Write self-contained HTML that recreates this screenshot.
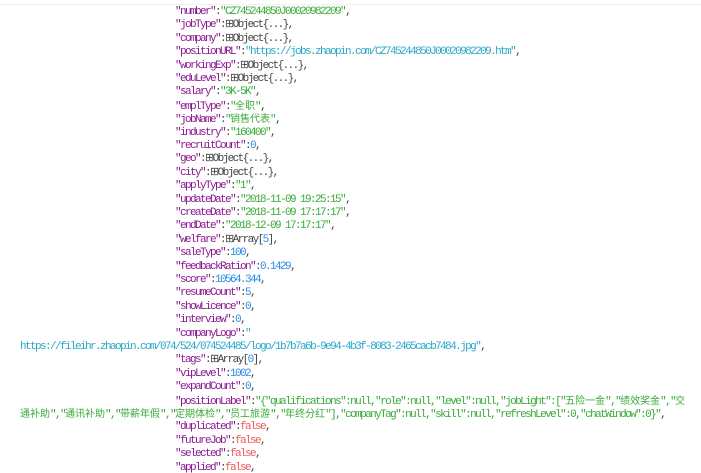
<!DOCTYPE html>
<html><head><meta charset="utf-8"><style>
html,body{margin:0;padding:0;background:#fff;width:701px;height:473px;overflow:hidden}
body{position:relative;font-family:"Liberation Mono","Noto Sans CJK SC",monospace;font-size:11px;letter-spacing:-1.6px}
.top{position:absolute;left:0;top:4px;width:701px;height:1px;background:#f0f0f0}
.l{position:absolute;left:175px;white-space:pre;line-height:13px;height:13px}
.w{left:20px}
.k{color:#8a1a8e}.s{color:#3aaa3a}.u{color:#2aa8c8}.n{color:#2a8ae6}.f{color:#f05a5a}.o{color:#444}
.c{font-family:"Noto Sans CJK SC",sans-serif;letter-spacing:0;font-size:10px;line-height:10px}
</style></head><body>
<div class="top"></div>
<div class="l" style="top:6px"><span class="k">"number"</span><span class="o">:</span><span class="s">"CZ745244850J00020982209"</span><span class="o">,</span></div>
<div class="l" style="top:19.4px"><span class="k">"jobType"</span><span class="o">:⊞Object{...},</span></div>
<div class="l" style="top:32.8px"><span class="k">"company"</span><span class="o">:⊞Object{...},</span></div>
<div class="l" style="top:46.2px"><span class="k">"positionURL"</span><span class="o">:</span><span class="u">"https://jobs.zhaopin.com/CZ745244850J00020982209.htm"</span><span class="o">,</span></div>
<div class="l" style="top:59.6px"><span class="k">"workingExp"</span><span class="o">:⊞Object{...},</span></div>
<div class="l" style="top:73px"><span class="k">"eduLevel"</span><span class="o">:⊞Object{...},</span></div>
<div class="l" style="top:86.4px"><span class="k">"salary"</span><span class="o">:</span><span class="s">"3K-5K"</span><span class="o">,</span></div>
<div class="l" style="top:99.8px"><span class="k">"emplType"</span><span class="o">:</span><span class="s">"<span class="c">全职</span>"</span><span class="o">,</span></div>
<div class="l" style="top:113.2px"><span class="k">"jobName"</span><span class="o">:</span><span class="s">"<span class="c">销售代表</span>"</span><span class="o">,</span></div>
<div class="l" style="top:126.6px"><span class="k">"industry"</span><span class="o">:</span><span class="s">"160400"</span><span class="o">,</span></div>
<div class="l" style="top:140px"><span class="k">"recruitCount"</span><span class="o">:</span><span class="n">0</span><span class="o">,</span></div>
<div class="l" style="top:153.4px"><span class="k">"geo"</span><span class="o">:⊞Object{...},</span></div>
<div class="l" style="top:166.8px"><span class="k">"city"</span><span class="o">:⊞Object{...},</span></div>
<div class="l" style="top:180.2px"><span class="k">"applyType"</span><span class="o">:</span><span class="s">"1"</span><span class="o">,</span></div>
<div class="l" style="top:193.6px"><span class="k">"updateDate"</span><span class="o">:</span><span class="s">"2018-11-09 19:25:15"</span><span class="o">,</span></div>
<div class="l" style="top:207px"><span class="k">"createDate"</span><span class="o">:</span><span class="s">"2018-11-09 17:17:17"</span><span class="o">,</span></div>
<div class="l" style="top:220.4px"><span class="k">"endDate"</span><span class="o">:</span><span class="s">"2018-12-09 17:17:17"</span><span class="o">,</span></div>
<div class="l" style="top:233.8px"><span class="k">"welfare"</span><span class="o">:⊞Array[</span><span class="n">5</span><span class="o">],</span></div>
<div class="l" style="top:247.2px"><span class="k">"saleType"</span><span class="o">:</span><span class="n">100</span><span class="o">,</span></div>
<div class="l" style="top:260.6px"><span class="k">"feedbackRation"</span><span class="o">:</span><span class="n">0.1429</span><span class="o">,</span></div>
<div class="l" style="top:274px"><span class="k">"score"</span><span class="o">:</span><span class="n">10564.344</span><span class="o">,</span></div>
<div class="l" style="top:287.4px"><span class="k">"resumeCount"</span><span class="o">:</span><span class="n">5</span><span class="o">,</span></div>
<div class="l" style="top:300.8px"><span class="k">"showLicence"</span><span class="o">:</span><span class="n">0</span><span class="o">,</span></div>
<div class="l" style="top:314.2px"><span class="k">"interview"</span><span class="o">:</span><span class="n">0</span><span class="o">,</span></div>
<div class="l" style="top:327.6px"><span class="k">"companyLogo"</span><span class="o">:</span><span class="u">"</span></div>
<div class="l w" style="top:341px"><span class="u">https://fileihr.zhaopin.com/074/524/074524485/logo/1b7b7a6b-9e94-4b3f-8083-2465cacb7484.jpg"</span><span class="o">,</span></div>
<div class="l" style="top:354.4px"><span class="k">"tags"</span><span class="o">:⊞Array[</span><span class="n">0</span><span class="o">],</span></div>
<div class="l" style="top:367.8px"><span class="k">"vipLevel"</span><span class="o">:</span><span class="n">1002</span><span class="o">,</span></div>
<div class="l" style="top:381.2px"><span class="k">"expandCount"</span><span class="o">:</span><span class="n">0</span><span class="o">,</span></div>
<div class="l" style="top:394.6px"><span class="k">"positionLabel"</span><span class="o">:</span><span class="s">"{"qualifications":null,"role":null,"level":null,"jobLight":["<span class="c">五险一金</span>","<span class="c">绩效奖金</span>","<span class="c">交</span></span></div>
<div class="l w" style="top:408px"><span class="s"><span class="c">通补助</span>","<span class="c">通讯补助</span>","<span class="c">带薪年假</span>","<span class="c">定期体检</span>","<span class="c">员工旅游</span>","<span class="c">年终分红</span>"],"companyTag":null,"skill":null,"refreshLevel":0,"chatWindow":0}"</span><span class="o">,</span></div>
<div class="l" style="top:421.4px"><span class="k">"duplicated"</span><span class="o">:</span><span class="f">false</span><span class="o">,</span></div>
<div class="l" style="top:434.8px"><span class="k">"futureJob"</span><span class="o">:</span><span class="f">false</span><span class="o">,</span></div>
<div class="l" style="top:448.2px"><span class="k">"selected"</span><span class="o">:</span><span class="f">false</span><span class="o">,</span></div>
<div class="l" style="top:461.6px"><span class="k">"applied"</span><span class="o">:</span><span class="f">false</span><span class="o">,</span></div>
</body></html>
